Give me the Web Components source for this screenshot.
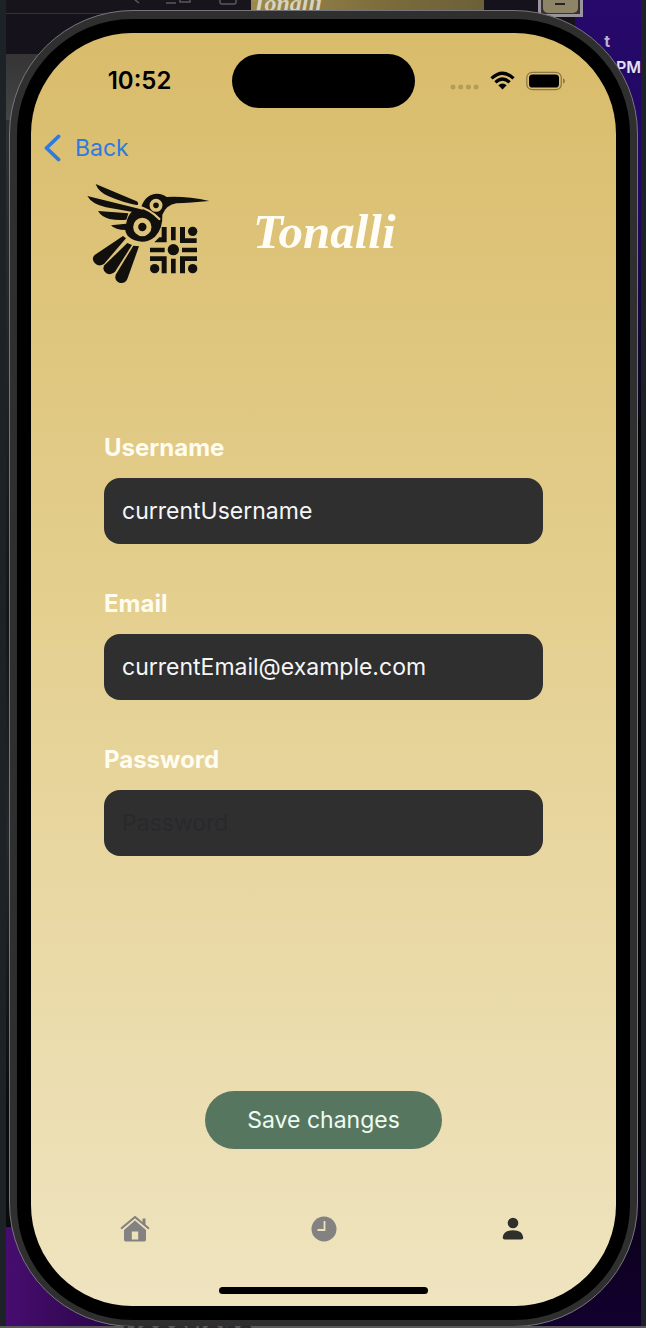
<!DOCTYPE html>
<html lang="en">
<head>
<meta charset="utf-8">
<meta name="viewport" content="width=device-width, initial-scale=1">
<title>Tonalli – Edit profile</title>
<style>
  html, body { margin: 0; min-height: 100%; background: #1d2227; }
  body { font-family: Inter, "Liberation Sans", sans-serif; color: #000; }
</style>
</head>
<body>
<desk-scene>
  <phone-shell>
    <status-bar time="10:52"></status-bar>
    <back-nav label="Back"></back-nav>
    <brand-header name="Tonalli"></brand-header>
    <profile-form>
      <form-field label="Username" type="text" value="currentUsername"></form-field>
      <form-field label="Email" type="email" value="currentEmail@example.com"></form-field>
      <form-field label="Password" type="password" placeholder="Password"></form-field>
      <pill-button slot="action">Save changes</pill-button>
    </profile-form>
    <tab-bar></tab-bar>
  </phone-shell>
</desk-scene>

<script>
const define = (name, render) => customElements.define(name, class extends HTMLElement {
  connectedCallback() {
    if (this.shadowRoot) return;
    this.attachShadow({ mode: 'open' }).innerHTML = render(this);
  }
});

/* Desktop with partly covered windows behind the simulator */
define('desk-scene', () => `
<style>
  :host { display: block; position: relative; overflow: hidden; min-height: 100vh; box-sizing: border-box; padding: 10px 8px 1px 9px; background: #1d2227; }
  .back { position: absolute; inset: 0 5px 0 6px; overflow: hidden; background: #050507; }
  .back div, .back span, .back svg { position: absolute; }
  .left { left: 0; top: 54px; width: 50%; height: 66px; background: linear-gradient(#353536, #454546); }
  .leftlow { left: 0; top: 120px; width: 8px; bottom: 102px; background: linear-gradient(#303032, #151517 45%, #22272b 65%, #0b0b0d 90%); }
  .top { left: 0; top: 0; right: 0; height: 54px; background: #15121b; }
  .bar { left: 0; top: 0; width: 50%; height: 13px; background: #17141c; border-bottom: 1px solid #37333b; }
  .app { left: 245px; width: 233px; top: 0; height: 12px; overflow: hidden; background: linear-gradient(90deg, #9c8a4c, #7b6b3b 60%, #6b6038); }
  .app span { left: 1px; bottom: -3px; font: italic bold 24px/24px "Liberation Serif", serif; color: #d8d2be; }
  .violet { right: 0; width: 66px; top: 0; height: 420px; background: linear-gradient(#26096a, #210762 50%, #090515); }
  .tile { left: 532px; top: 0; width: 39px; height: 14px; border: 3px solid #99949e; border-top: 0; background: #38332b; }
  .tile i { position: absolute; inset: 0 2px 1px; background: #8e8569; border-radius: 0 0 5px 5px; }
  .tile b { position: absolute; left: 14px; top: 3px; width: 10px; height: 2px; background: #252422; }
  .t { right: 31px; top: 33px; font: bold 16px/16px Inter, sans-serif; color: #bab4cc; }
  .pm { right: 0; top: 59px; font: 600 16px/16px Inter, sans-serif; color: #e4e0ef; }
  .low { left: 0; bottom: 0; width: 50%; height: 101px; background: linear-gradient(90deg, #470d70, #23043f 40%); }
  .lowr { right: 0; bottom: 0; width: 50%; height: 180px; background: linear-gradient(#07020f, #13002f); }
  .foot { position: absolute; left: 0; right: 0; bottom: 0; height: 2px; background: #5b595c; overflow: hidden; }
  .foot span { position: absolute; left: 122px; top: -9px; font: bold 27px/27px Inter, sans-serif; color: #2d292c; }
  ::slotted(*) { position: relative; }
</style>
<div class="back" aria-hidden="true">
  <div class="top"></div><div class="bar"></div>
  <svg style="left:120px;top:0" width="120" height="8" fill="none" stroke="#5b5760" stroke-width="1.5"><path d="M9 0l4 3M40 3h10M54-2h10v4H54zM94-3h16v5q0 2-2 2H96q-2 0-2-2z"/></svg>
  <div class="app"><span>Tonalli</span></div>
  <div class="left"></div><div class="leftlow"></div>
  <div class="violet"></div><div class="tile"><i></i><b></b></div>
  <span class="t">t</span><span class="pm">PM</span>
  <div class="low"></div><div class="lowr"></div>
</div>
<slot></slot>
<div class="foot" aria-hidden="true"><span>Reactions</span></div>`);

define('phone-shell', () => `
<style>
  :host { display: flex; min-height: calc(100vh - 11px); box-sizing: border-box; padding: 8px 7px 6px; border: 1px solid #77777b; border-radius: 124px; background: #2f2f2f; }
  .bezel { flex: 1; display: flex; padding: 14px; border-radius: 115px; background: #000; }
  main { flex: 1; min-width: 0; display: flex; flex-direction: column; border-radius: 101px; overflow: hidden; background: linear-gradient(#d9bc6b, #e4cf8f 45%, #efe4c0); }
</style>
<div class="bezel"><main><slot></slot></main></div>`);

define('status-bar', el => `
<style>
  :host { display: grid; grid-template-columns: 1fr 183px 1fr; align-items: center; height: 54px; padding: 21px 0 16px; }
  time { justify-self: center; margin-left: 16px; font: 600 24px/30px Inter, sans-serif; }
  .island { height: 54px; border-radius: 27px; background: #000; }
  .state { display: flex; align-items: center; gap: 11px; margin-left: 35px; }
  svg { display: block; flex: none; }
</style>
<time>${el.getAttribute('time')}</time>
<div class="island"></div>
<div class="state">
  <svg width="29" height="20" viewBox="0 0 29 20" fill="#b39b58" aria-hidden="true"><circle cx="3" cy="16" r="2.5"/><circle cx="10.700" cy="16" r="2.500"/><circle cx="18.400" cy="16" r="2.500"/><circle cx="26.100" cy="16" r="2.500"/></svg>
  <svg width="25" height="20" viewBox="0 0 25 20" role="img" aria-label="Wi-Fi"><g fill="none" stroke="#000" stroke-width="3.200"><path d="M1.500 7.400Q12.500-3 23.500 7.400"/><path d="M5.400 11.300Q12.500 4.700 19.600 11.300"/></g><path d="M8.300 14.200Q12.500 10.700 16.700 14.200L12.500 18.600z"/></svg>
  <svg width="41" height="20" viewBox="0 0 41 20" role="img" aria-label="Battery full"><rect x=".8" y="1.300" width="34.500" height="17.400" rx="5.500" fill="none" stroke="#8b7947" stroke-width="1.300"/><rect x="3" y="3.500" width="30" height="13" rx="3.600"/><path d="M37 7.300q2 .8 2 2.700t-2 2.700z" fill="#8b7947"/></svg>
</div>`);

define('back-nav', el => `
<style>
  :host { display: flex; align-items: center; height: 48px; padding: 0 13px; }
  a { display: flex; align-items: center; gap: 14px; color: #2c7be0; text-decoration: none; font: 23px/30px Inter, sans-serif; }
</style>
<a href="#back"><svg width="17" height="28" viewBox="0 0 17 28" fill="none" stroke="currentColor" stroke-width="3.800" stroke-linecap="round" stroke-linejoin="round" aria-hidden="true"><path d="M14.500 2.500L2.500 14l12 11.500"/></svg>${el.getAttribute('label')}</a>`);

/* Hummingbird mark with the app name */
define('brand-header', el => `
<style>
  :host { display: flex; align-items: center; gap: 33px; padding: 4px 49px 0; }
  svg { flex: none; display: block; }
  h1 { margin: 0; font: italic bold 49px/56px "Liberation Serif", serif; color: #fffdf6; }
</style>
<svg width="140" height="112" viewBox="0 0 420 336" fill="#11100d" aria-hidden="true">
  <path d="M47 24L170 76Q177 80 173 88Q129 80 86 61Q55 48 47 24z"/>
  <path d="M22 60L189 101Q214 107 235 128Q238 134 231 136Q205 121 180 112L78 94Q35 84 22 60z"/>
  <path d="M54 105L145 112L139 131Q116 134 88 129Q64 122 54 105z"/>
  <path d="M93 148L138 143L142 162Q106 163 93 148z"/>
  <path d="M184 92Q197 54 231 53Q249 54 260 63Q320 60 388 75Q330 80 289 82Q260 86 247 116Q249 158 225 182Q198 205 164 193Q126 178 139 141Q142 120 158 104L190 102z"/>
  <path d="M172 90Q212 101 238 129" fill="none" stroke="#dec37a" stroke-width="7" stroke-linecap="round"/>
  <circle cx="228" cy="88" r="14" fill="none" stroke="#dec37a" stroke-width="11"/>
  <circle cx="187" cy="153" r="20" fill="none" stroke="#dec37a" stroke-width="15"/>
  <path d="M129 180L138 187L72 264Q55 274 44 261Q33 247 44 237z"/>
  <path d="M142 201L156 207L106 286Q95 300 79 292Q65 282 73 268z"/>
  <path d="M160 209L177 211L142 309Q135 324 118 320Q101 312 108 295z"/>
  <path d="M245 153h15v46h-37l15-15h7zM273 153h14v40h-14zM300 153h15v34h35v14h-50zM210 215h44v14h-44zM306 215h45v14h-45zM210 241h50v51h-15v-37h-35zM273 248h14v44h-14zM300 241h51v14h-36v37h-15z"/>
  <circle cx="280" cy="221" r="17"/><circle cx="338" cy="166" r="14"/><circle cx="224" cy="278" r="14"/><circle cx="338" cy="278" r="14"/>
</svg>
<h1>${el.getAttribute('name')}</h1>`);

define('profile-form', () => `
<style>
  :host { display: flex; flex: 1; }
  form { flex: 1; min-width: 0; display: flex; flex-direction: column; gap: 43px; padding: 143px 73px 0; }
  .action { margin-top: auto; display: flex; justify-content: center; padding-bottom: 52px; }
</style>
<form onsubmit="return false"><slot></slot><div class="action"><slot name="action"></slot></div></form>`);

define('form-field', el => `
<style>
  :host { display: flex; flex-direction: column; gap: 13px; }
  label { font: 700 24px/34px Inter, sans-serif; color: #fffcf0; }
  input { display: block; width: 100%; height: 66px; box-sizing: border-box; padding: 0 18px; border: 0; border-radius: 16px; outline: 0; background: #2f2f30; color: #f6f6f6; font: 23px/30px Inter, sans-serif; }
  input::placeholder { color: #29292b; opacity: 1; }
</style>
<label for="field">${el.getAttribute('label')}</label>
<input id="field" type="${el.getAttribute('type')}" value="${el.getAttribute('value') || ''}" placeholder="${el.getAttribute('placeholder') || ''}">`);

define('pill-button', () => `
<style>
  :host { display: block; }
  button { display: block; height: 58px; padding: 0 42px; border: 0; border-radius: 29px; background: #577660; color: #eefbf2; font: 23px/30px Inter, sans-serif; }
</style>
<button type="submit"><slot></slot></button>`);

define('tab-bar', () => `
<style>
  :host { display: block; }
  nav { display: grid; grid-template-columns: repeat(3, 1fr); padding: 12px 9px 0; }
  a { display: flex; justify-content: center; align-items: center; height: 32px; color: #838280; }
  a[aria-current] { color: #2f2f2c; }
  .home { width: 209px; height: 7px; margin: 42px auto 12px; border-radius: 4px; background: #000; }
</style>
<nav>
  <a href="#home" aria-label="Home"><svg width="30" height="28" viewBox="0 0 30 28" fill="currentColor"><path d="M1.800 13L15 2l13.200 11" fill="none" stroke="currentColor" stroke-width="2.200" stroke-linecap="round" stroke-linejoin="round"/><path d="M22.500 3.500h3v7.500l-3-2.400z"/><path fill-rule="evenodd" d="M15 5.600L26 15v9.800q0 1.700-1.700 1.700H5.700Q4 26.500 4 24.800V15zM11.800 16.500v8h6.400v-8z"/></svg></a>
  <a href="#history" aria-label="History"><svg width="26" height="26" viewBox="0 0 26 26"><circle cx="13" cy="13" r="12.500" fill="currentColor"/><path d="M13.500 5v9H6.500" fill="none" stroke="#eee2bb" stroke-width="1.800"/></svg></a>
  <a href="#profile" aria-label="Profile" aria-current="page"><svg width="22" height="24" viewBox="0 0 22 24" fill="currentColor"><circle cx="11" cy="6" r="5.300"/><path d="M.7 20.500Q1.500 13.300 11 13.300t10.300 7.200q0 2-2 2H2.700q-2 0-2-2z"/></svg></a>
</nav>
<div class="home"></div>`);
</script>
</body>
</html>
